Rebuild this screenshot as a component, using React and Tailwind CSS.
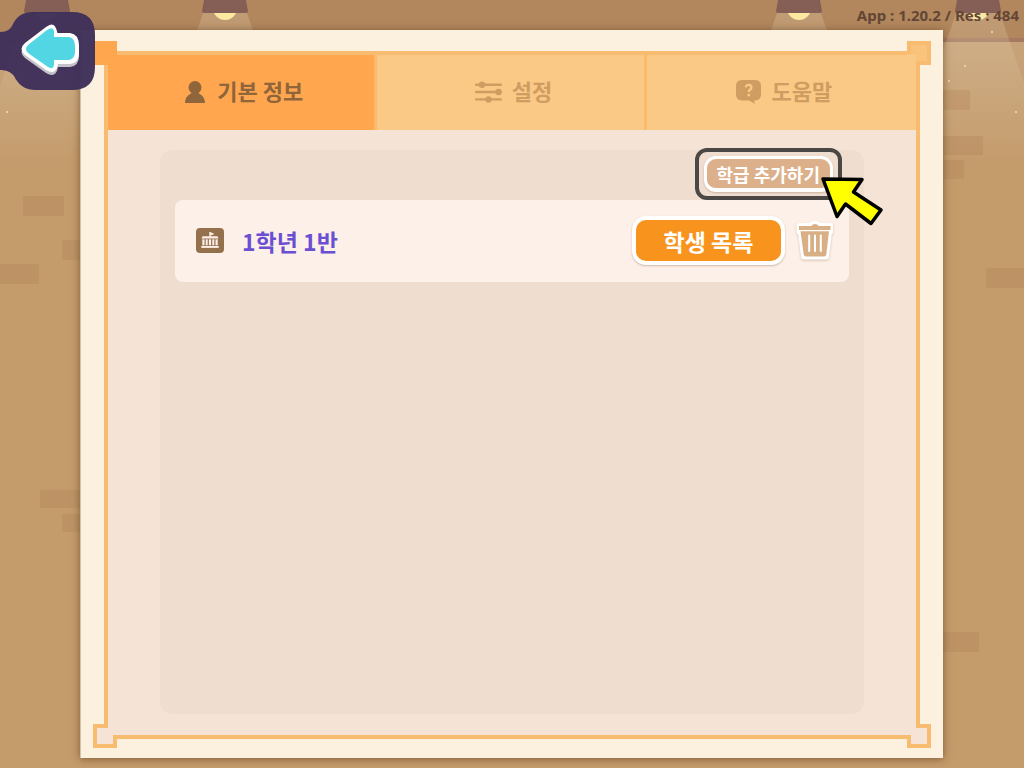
import React, { useState } from "react";

function Backdrop() {
  const lamps = [47, 225, 799, 978];
  const bricks = [
    [23, 196, 41, 20], [62, 240, 50, 20], [0, 264, 39, 20],
    [40, 490, 60, 18], [62, 514, 40, 18],
    [930, 90, 40, 20], [930, 136, 53, 19], [930, 160, 34, 19],
    [986, 268, 38, 20], [930, 632, 49, 20],
  ];
  const dots = [[7, 112], [992, 32], [965, 66], [949, 81], [1016, 112]];
  return (
    <svg className="absolute inset-0 h-full w-full" viewBox="0 0 1024 768" preserveAspectRatio="xMidYMin slice" aria-hidden="true">
      <defs>
        <linearGradient id="wall" x1="0" y1="0" x2="0" y2="1">
          <stop offset="0" stopColor="#c7a37a" />
          <stop offset="1" stopColor="#c49b6b" />
        </linearGradient>
        <linearGradient id="beam" x1="0" y1="0" x2="0" y2="1">
          <stop offset="0" stopColor="#e6cfae" stopOpacity="0.28" />
          <stop offset="1" stopColor="#e6cfae" stopOpacity="0" />
        </linearGradient>
      </defs>
      <rect width="1024" height="768" fill="#c49b6b" />
      <rect y="42" width="1024" height="130" fill="url(#wall)" />
      <rect width="1024" height="38" fill="#b2875d" />
      <rect y="38" width="1024" height="4" fill="#a57a60" />
      {bricks.map(([x, y, w, h]) => (
        <rect key={`${x}-${y}`} x={x} y={y} width={w} height={h} rx="1" fill="#bd9366" />
      ))}
      {lamps.map((x) => (
        <g key={x}>
          <path d={`M${x - 22} 13H${x + 22}L${x + 72} 160H${x - 72}Z`} fill="url(#beam)" />
          <circle cx={x} cy="8" r="12" fill="#fbe9a2" />
          <path d={`M${x - 21} 0H${x + 21}L${x + 23} 11Q${x + 23} 13 ${x + 21} 13H${x - 21}Q${x - 23} 13 ${x - 23} 11Z`} fill="#855f55" />
        </g>
      ))}
      {dots.map(([x, y]) => (
        <circle key={`${x}-${y}`} cx={x} cy={y} r="1" fill="#f3ddb4" />
      ))}
    </svg>
  );
}

function Corner({ className, fill, line = "#f7bc70" }) {
  return (
    <svg className={`absolute h-6 w-6 ${className}`} viewBox="0 0 24 24" aria-hidden="true">
      <rect width="24" height="24" fill={fill} />
      <path d="M15 2H2V22H22V11" fill="none" stroke={line} strokeWidth="4" />
    </svg>
  );
}

function PersonIcon() {
  return (
    <svg className="h-[22px] w-[22px]" viewBox="0 0 22 22" fill="currentColor" aria-hidden="true">
      <circle cx="10" cy="6.5" r="6.5" />
      <path d="M7.500 10.500h5c0 2.500 7.500 3 7.500 11.500H0c0-8.500 7.500-9 7.500-11.500z" />
    </svg>
  );
}

function SlidersIcon() {
  return (
    <svg className="h-[22px] w-[27px]" viewBox="0 0 27 22" fill="currentColor" aria-hidden="true">
      <rect y="2.5" width="27" height="2.4" rx="1.2" />
      <rect y="9.8" width="27" height="2.4" rx="1.2" />
      <rect y="17.2" width="27" height="2.4" rx="1.2" />
      <circle cx="7" cy="3.7" r="3.2" />
      <circle cx="23.5" cy="11" r="3.2" />
      <circle cx="13.5" cy="18.4" r="3.2" />
    </svg>
  );
}

function HelpIcon() {
  return (
    <svg className="h-6 w-[25px]" viewBox="0 0 25 24" aria-hidden="true">
      <path d="M6 0H19Q25 0 25 6V14Q25 20 19 20.500H18L19 24L13 20.500H6Q0 20 0 14V6Q0 0 6 0Z" fill="currentColor" />
      <path d="M9.8 7.4Q10 4.9 12.6 4.9Q15.4 4.9 15.4 7.4Q15.4 8.9 13.9 9.8Q12.8 10.5 12.8 12" fill="none" stroke="#fac985" strokeWidth="2.4" />
      <circle cx="12.8" cy="15" r="1.5" fill="#fac985" />
    </svg>
  );
}

function SchoolIcon() {
  return (
    <svg className="h-[25px] w-7" viewBox="0 0 28 25" aria-hidden="true">
      <rect width="28" height="25" rx="4" fill="#95704c" />
      <g fill="#fdf0e8">
        <path d="M13.3 4H14.3L18.5 6L14.5 7.5V8.2H21.5L22.5 10.5H5.5L6.5 8.2H13.3Z" />
        <rect x="6.3" y="11.3" width="2.2" height="6" />
        <rect x="9.7" y="11.3" width="2" height="6" />
        <rect x="12.9" y="11.3" width="2.2" height="6" />
        <rect x="16.3" y="11.3" width="2" height="6" />
        <rect x="19.5" y="11.3" width="2.2" height="6" />
        <rect x="5.3" y="18" width="17.4" height="1.9" />
      </g>
    </svg>
  );
}

function TrashIcon() {
  return (
    <svg className="h-[42px] w-9 overflow-visible drop-shadow-[0_1px_1px_rgba(120,80,50,0.3)]" viewBox="0 0 36 42" aria-hidden="true">
      <path d="M2.500 6H13Q18 1.500 23 6H33V12H32L29 36.500H7L4 12H2.500Z" fill="#fff" stroke="#fff" strokeWidth="6" strokeLinejoin="round" />
      <path d="M2 6H14.500Q15.500 4 18 4T21.500 6H33.500V10H2Z" fill="#d9af86" />
      <path d="M3.500 11.200H32L29.300 34.500Q29 36.500 27 36.500H9Q7 36.500 6.700 34.500Z" fill="#d9af86" />
      <path d="M12.200 15.500V31M18 15.500V31M23.800 15.500V31" stroke="#fff" strokeWidth="2" strokeLinecap="round" />
    </svg>
  );
}

function BackButton() {
  return (
    <button type="button" aria-label="뒤로" className="absolute left-0 top-3 z-10 cursor-pointer">
      <svg className="h-[78px] w-[95px]" viewBox="0 0 95 78" aria-hidden="true">
        <path d="M0 20C7 20 11 17 13 12C17 4 23 0 33 0H72Q95 0 95 23V55Q95 78 72 78H36C24 78 18 72 14 64C11 60 6 58 0 58Z" fill="#3f3059" fillOpacity="0.97" />
        <path d="M25 31L46 15Q56 8 58 20V21H70Q79 22 79 34V41Q79 51 70 52H58Q56 64 46 58L25 43Q18 37 25 31Z" fill="#c3c2ca" transform="translate(0 3)" />
        <path d="M25 31L46 15Q55 8 57 20V21H70Q79 22 79 34V41Q79 51 70 52H58Q56 64 46 58L25 43Q18 37 25 31Z" fill="#fff" />
        <path d="M28 33L47 18Q53 14 54 19V25H69Q75 26 75 34V41Q74 47 69 48H54V53Q53 58 48 55L28 41Q24 37 28 33Z" fill="#53d6e4" />
      </svg>
    </button>
  );
}

function Pointer() {
  return (
    <svg className="pointer-events-none absolute left-[116px] top-5 z-10 h-[52px] w-[66px]" viewBox="0 0 66 52" aria-hidden="true">
      <path d="M3 3L42 3.500L33.500 16L61 34L51 47.500L25.500 28L17 40.500Z" fill="#ff0" stroke="#000" strokeWidth="3.500" strokeLinejoin="round" />
    </svg>
  );
}

const tabs = [
  { id: "info", label: "기본 정보", Icon: PersonIcon },
  { id: "settings", label: "설정", Icon: SlidersIcon },
  { id: "help", label: "도움말", Icon: HelpIcon },
];

export default function App() {
  const [active, setActive] = useState("info");
  return (
    <div className="relative flex min-h-screen overflow-hidden pb-[10px] pl-20 pr-[81px] pt-[30px] font-['Noto_Sans_CJK_KR',sans-serif]">
      <Backdrop />
      <BackButton />
      <p className="absolute right-[5px] top-[5px] z-10 font-['Noto_Sans','Noto_Sans_CJK_KR',sans-serif] text-[15px] font-bold leading-5 text-[#634636]">
        App : 1.20.2 / Res : 484
      </p>
      <main className="relative flex flex-1 flex-col border-l border-[#d5c3a8] bg-[#fcf0df] px-[23px] pb-[19px] pt-[21px] shadow-[0_1px_8px_rgba(80,50,20,0.6)]">
        <div className="relative flex flex-1 flex-col border-4 border-[#f7bc70] bg-[#f5e4d6]">
          <Corner className="-left-[15px] -top-[14px] -scale-y-100" fill="#ffa64f" line="#fda850" />
          <Corner className="-right-[15px] -top-[14px] -scale-100" fill="#fac37c" />
          <Corner className="-bottom-[13px] -left-[15px]" fill="#f5e4d6" />
          <Corner className="-bottom-[13px] -right-[15px] -scale-x-100" fill="#f5e4d6" />
          <div role="tablist" className="relative grid h-[75px] grid-cols-3">
            {tabs.map(({ id, label, Icon }) => (
              <button
                key={id}
                type="button"
                role="tab"
                aria-selected={active === id}
                onClick={() => setActive(id)}
                className={`flex cursor-pointer items-center justify-center gap-[10px] border-r-[3px] border-[#fabb6c] pb-px pl-[6px] text-[22px] font-bold leading-8 last:border-r-0 ${
                  active === id ? "bg-[#ffa64f] text-[#8f653b]" : "bg-[#fac985] text-[#cf9c62]"
                }`}
              >
                <Icon />
                <span className="pb-1">{label}</span>
              </button>
            ))}
          </div>
          <section className="mx-[52px] mb-[21px] mt-5 flex flex-1 flex-col rounded-xl bg-[#efddd0] px-[15px]">
            <div className="flex h-12 items-center justify-end pr-4">
              <div className="relative">
                <button
                  type="button"
                  className="flex h-9 cursor-pointer items-center justify-center rounded-xl border-[3px] border-b-4 border-white bg-[#dbb08a] px-[10px] text-lg font-bold leading-6 text-white shadow-[0_1px_2px_rgba(120,80,50,0.3)]"
                >
                  학급 추가하기
                </button>
                <span className="pointer-events-none absolute -inset-x-[9px] -inset-y-2 rounded-xl border-4 border-[#4a4745]" />
                <Pointer />
              </div>
            </div>
            <ul className="pt-0.5">
              <li className="flex h-[82px] items-center rounded-lg bg-[#fdf0e8] pb-px pl-[21px] pr-4">
                <SchoolIcon />
                <span className="ml-[18px] flex-1 text-[23px] font-bold leading-8 text-[#6a4fd3]">1학년 1반</span>
                <button
                  type="button"
                  className="flex h-[49px] w-[153px] cursor-pointer items-center justify-center rounded-[14px] border-4 border-white bg-[#f8941d] text-[23px] font-bold leading-8 text-white shadow-[0_1px_2px_rgba(120,80,50,0.35)]"
                >
                  학생 목록
                </button>
                <button type="button" aria-label="삭제" className="ml-3 cursor-pointer">
                  <TrashIcon />
                </button>
              </li>
            </ul>
          </section>
        </div>
      </main>
    </div>
  );
}
